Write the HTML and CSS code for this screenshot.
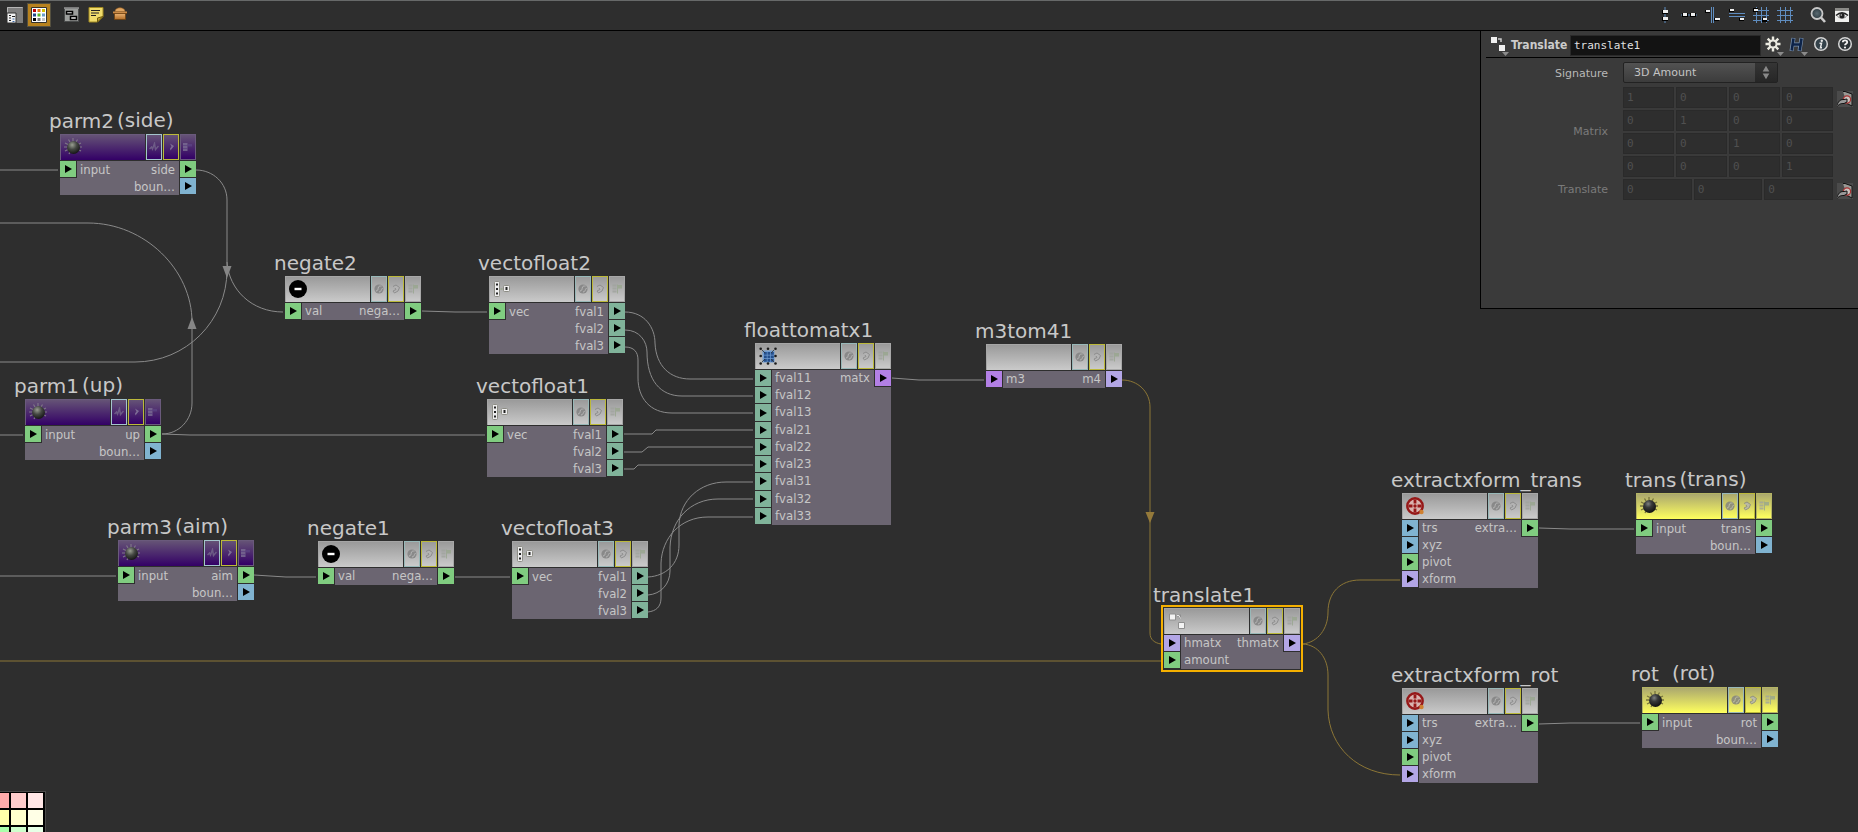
FILE: index.html
```
<!DOCTYPE html>
<html lang="en">
<head>
<meta charset="utf-8">
<title>Node network editor</title>
<link rel="stylesheet" href="styles.css">
</head>
<body>
<svg class="defs" aria-hidden="true">
  <defs>
    <radialGradient id="ball" cx=".4" cy=".3" r=".7"><stop offset="0" stop-color="#9a9f92"/><stop offset=".5" stop-color="#444742"/><stop offset="1" stop-color="#161616"/></radialGradient>
    <radialGradient id="darkball" cx=".4" cy=".3" r=".7"><stop offset="0" stop-color="#7d8080"/><stop offset=".4" stop-color="#383a3a"/><stop offset="1" stop-color="#111"/></radialGradient>
    <linearGradient id="crate" x2="0" y2="1"><stop offset="0" stop-color="#efb878"/><stop offset="1" stop-color="#b06d28"/></linearGradient>
    <radialGradient id="glass"><stop offset="0" stop-color="#5a6a72"/><stop offset="1" stop-color="#2d3a40"/></radialGradient>
    <symbol id="i-knob" viewBox="0 0 18 18"><g stroke="#7f7688" stroke-width="1.200"><path d="M9 0v3M4.500 1.500l1.500 2.500M13.500 1.500l-1.500 2.500M1 5l3 1.500M17 5l-3 1.500M0 9h3M18 9h-3M1 13l3-1.500M17 13l-3-1.500M5 16l1-2"/></g><circle cx="9.500" cy="9.500" r="6.500" fill="url(#ball)"/></symbol>
    <symbol id="i-knob-dark" viewBox="0 0 18 18"><g stroke="#77743d" stroke-width="1.300"><path d="M9 0v3M4.500 1.500l1.500 2.500M13.500 1.500l-1.500 2.500M1 5l3 1.500M17 5l-3 1.500M0 9h3M18 9h-3M1 13l3-1.500M17 13l-3-1.500M5 16l1-2"/></g><circle cx="9.500" cy="9.500" r="6.500" fill="url(#darkball)"/></symbol>
    <symbol id="i-minus" viewBox="0 0 18 18"><circle cx="9" cy="9" r="9" fill="#000"/><path d="M5.500 9h7" stroke="#fff" stroke-width="2.400"/></symbol>
    <symbol id="i-split" viewBox="0 0 18 18"><rect x="1.500" y="1.500" width="5" height="15" rx="1" fill="#eee" stroke="#8d8d85"/><path d="M3 3.500h2v2H3zM3 8h2v2H3zM3 12.500h2v2H3z" fill="#222"/><rect x="10.500" y="5.500" width="6" height="6" rx="1" fill="#eee" stroke="#8d8d85"/><path d="M12.500 7h2v3h-2z" fill="#222"/><path d="M7.500 9h2" stroke="#9aa58c" stroke-width="1.500"/></symbol>
    <symbol id="i-matrix" viewBox="0 0 18 18"><rect x="3.500" y="3.500" width="12" height="12" fill="#6f9bd0"/><g fill="#244f8c"><path d="M5 5h2.800v2.800H5zM8.500 5h2.800v2.800H8.500zM12 5h2.800v2.800H12zM5 8.500h2.800v2.800H5zM8.500 8.500h2.800v2.800H8.500zM12 8.500h2.800v2.800H12zM5 12h2.800v2.800H5zM8.500 12h2.800v2.800H8.500zM12 12h2.800v2.800H12z"/></g><g fill="#1c1c1c"><circle cx="1.700" cy="1.700" r="1.300"/><circle cx="9" cy="1.700" r="1.300"/><circle cx="16.500" cy="1.700" r="1.300"/><circle cx="1.700" cy="9" r="1.300"/><circle cx="16.500" cy="9" r="1.300"/><circle cx="1.700" cy="16.500" r="1.300"/><circle cx="9" cy="16.500" r="1.300"/><circle cx="16.500" cy="16.500" r="1.300"/></g><path d="M3 3l3 3M15 3l-3 3M3 15l3-3M15 15l-3-3" stroke="#333" stroke-width=".8"/></symbol>
    <symbol id="i-move" viewBox="0 0 18 18"><path d="M1.500 2h6v6h-6zM10.500 10.500h6v6h-6z" fill="#f3f3f3" stroke="#8f8f8f"/><path d="M9 3.500h3v3" fill="none" stroke="#8f8f8f" stroke-width="2"/><path d="M9 3.500h2l1.500 3" fill="none" stroke="#e4e4e4"/></symbol>
    <symbol id="i-wheel" viewBox="0 0 18 18"><circle cx="9" cy="9" r="7.700" fill="#d9b4b0" stroke="#961818" stroke-width="2.400"/><g fill="#961818"><circle cx="9" cy="9" r="1.700"/><path d="M7.600 2.500h2.800v4H7.600zM7.600 11.500h2.800v4H7.600zM2.500 7.600h4v2.800h-4zM11.500 7.600h4v2.800h-4z"/></g><circle cx="15.500" cy="15" r="2.200" fill="#d08030"/></symbol>
    <symbol id="i-bypass" viewBox="0 0 10 10"><circle cx="5" cy="5" r="4.600" fill="#808080"/><path d="M2 7c2 0 2-2 2.500-4C5 2 6 2 7.500 2M5 8c2 0 2-2 3.500-4" stroke="#b9b9b9" fill="none"/></symbol>
    <symbol id="i-link" viewBox="0 0 10 10"><path d="M2 2.500l3-1.500 3.500 2.500L7 7 3.500 9 2 7l3-1.500L4 4" fill="#b5b5b5" stroke="#858585"/></symbol>
    <symbol id="i-lock" viewBox="0 0 10 10"><path d="M.5 1.500h4M.5 4.500h4M.5 7.500h4" stroke="#a0a49e" stroke-width="2"/><path d="M5.500.5v9M6 1.500h4v2.500H6z" fill="#98a68e" stroke="#98a68e"/></symbol>
    <symbol id="i-curve" viewBox="0 0 10 10"><path d="M.5 7l2-2 1 2 2-5.500 1 6 3-3.500" fill="none" stroke="#75678c" stroke-width="1.500"/></symbol>
    <symbol id="i-hook" viewBox="0 0 10 10"><path d="M4 1.500l4 2.500-3.500 4.500L4 6.500l1.500-2z" fill="#8a7da0"/></symbol>
    <symbol id="i-bars" viewBox="0 0 10 10"><path d="M0 1h4.500v8H0z" fill="#7c6e95"/><path d="M5 2h4v2.500H5z" fill="#5b4383"/><path d="M0 3.500h5M0 6.500h5" stroke="#5b4383" stroke-width=".7"/></symbol>
    <symbol id="i-cable" viewBox="0 0 16 16"><path d="M0 0h16v16H0z" fill="#4b4b4b"/><path d="M6 .5h2l7 2.500v12l-5-2.500" fill="#989894" stroke="#111"/><circle cx="10" cy="8.500" r="3.600" fill="#ccc4c0" stroke="#a33" stroke-width="1.200"/><path d="M0 14c2-5 4-5.500 7-5.500l3-.5v3l-3 1.500c-3 0-4 0-7 3" fill="#999" stroke="#111"/></symbol>
  </defs>
</svg>

<header class="toolbar">
  <div class="tools">
    <button class="tool" aria-label="Tree list"><svg viewBox="0 0 16 16"><path d="M0 0h16v16H0z" fill="#7e7e7e"/><path d="M.5 16V.5H15.500" fill="none" stroke="#b5b5b5"/><path d="M0 6h9v10H0z" fill="#f2f2f2" stroke="#333"/><path d="M2 8.500h2M5 9.500h3M2 11h2M2 13.500h2" stroke="#222"/><path d="M5.500 12h2M5.500 14.500h2" stroke="#3a69a8"/></svg></button>
    <button class="tool active" aria-label="Color palette"><svg viewBox="0 0 16 16"><path d="M.5.500h15v15H.500z" fill="#fff" stroke="#35332d"/><path fill="#b00" d="M2 2h3v3H2z"/><path fill="#e07010" d="M6.500 2h3v3h-3z"/><path fill="#d8c000" d="M11 2h3v3h-3z"/><path fill="#234a8c" d="M2 6.500h3v3H2z"/><path fill="#57b820" d="M6.500 6.500h3v3h-3z"/><path fill="#6a9cc8" d="M11 6.500h3v3h-3z"/><path d="M2 11h3v3H2z"/><path fill="#777" d="M6.500 11h3v3h-3z"/><path fill="#c4c4c4" d="M11 11h3v3h-3z"/></svg></button>
  </div>
  <div class="tools">
    <button class="tool" aria-label="Network box"><svg viewBox="0 0 16 16"><path d="M.5 1.500h14v13H.500z" fill="#9c9e9c" stroke="#4a4c4c"/><path d="M0 1h15" stroke="#c6c6c6"/><path d="M2.500 4.500h6v2.500h-6zM6.500 9.500h6V12.500h-6z" fill="#e8e8e8" stroke="#000" stroke-width="1.500"/></svg></button>
    <button class="tool" aria-label="Sticky note"><svg viewBox="0 0 16 16"><path d="M1 .5h14v9l-5.500 5.500H1z" fill="#f0dc6c" stroke="#a08820"/><path d="M9.500 15v-4l5.500-1.500z" fill="#c4a832" stroke="#6d5a10"/><path d="M3 3.500h9M3 6h8M3 8.500h5" stroke="#222"/></svg></button>
    <button class="tool" aria-label="Subnet box"><svg viewBox="0 0 16 16"><path d="M2.500 6h11v6.500h-11z" fill="url(#crate)" stroke="#71430f" stroke-width=".8"/><path d="M3 4.500c0-5 10-5 10 0z" fill="#e0a663" stroke="#8c5518" stroke-width=".6"/><path d="M1 4.500h14v2H1z" fill="#c98a48"/><path d="M1 6.500h14" stroke="#6f400f" stroke-width=".8"/></svg></button>
  </div>
  <div class="tools end">
    <button class="tool" aria-label="Align vertically"><svg viewBox="0 0 16 16"><path d="M8 0v16" stroke="#5f8dc0"/><path d="M5 3h6v4H5zM5 10h6v4H5z"/><path d="M6 3h5v3H6zM6 10h5v3H6z" fill="#eee"/></svg></button>
    <button class="tool" aria-label="Align horizontally"><svg viewBox="0 0 16 16"><path d="M0 8h16" stroke="#5f8dc0"/><path d="M1 6h6v4H1zM9 6h6v4H9z"/><path d="M2 6h4v3H2zM10 6h4v3h-4z" fill="#eee"/></svg></button>
    <button class="tool" aria-label="Snap left"><svg viewBox="0 0 16 16"><path d="M6.500 0v16M8.500 0v16" stroke="#5f8dc0"/><path d="M0 3h5v3H0zM9 11h5v3H9z"/><path d="M1 3h4v2H1zM10 11h5v2h-5z" fill="#eee"/></svg></button>
    <button class="tool" aria-label="Snap rows"><svg viewBox="0 0 16 16"><path d="M0 6.500h16M0 9.500h16" stroke="#5f8dc0"/><path d="M0 2h5v3H0zM10 11h5v3h-5z"/><path d="M1 2h4v2H1zM11 11h4v2h-4z" fill="#eee"/></svg></button>
    <button class="tool" aria-label="Snap to grid"><svg viewBox="0 0 16 16"><path d="M3.500 0v16M8.500 0v16M13.500 0v16M0 3.500h16M0 8.500h16M0 13.500h16" stroke="#5f8dc0"/><path d="M0 1h5v4H0zM9 11h5v4H9z"/><path d="M1 2h4v2H1zM10 11h4v2h-4z" fill="#eee"/></svg></button>
    <button class="tool" aria-label="Show grid"><svg viewBox="0 0 16 16"><path d="M3.500 0v16M8.500 0v16M13.500 0v16M0 3.500h16M0 8.500h16M0 13.500h16" stroke="#5f8dc0"/></svg></button>
  </div>
  <div class="tools">
    <button class="tool" aria-label="Find"><svg viewBox="0 0 16 16"><circle cx="7" cy="6.500" r="5.500" fill="url(#glass)" stroke="#c8c8c8" stroke-width="1.800"/><path d="M11 10.500l4 4.500" stroke="#ccc" stroke-width="2.600"/></svg></button>
    <button class="tool" aria-label="Display options"><svg viewBox="0 0 16 16"><path d="M1 1h14v14H1z" fill="#f0f0ee"/><path d="M1 1h14v3H1z" fill="#8b8b88"/><path d="M2 8.500Q8 3 14 8.500" fill="none" stroke="#222" stroke-width="1.600"/><path d="M3.500 9.500Q8 13 12.500 9.500" fill="none" stroke="#777"/><circle cx="8" cy="8.700" r="2.600" fill="#222"/><circle cx="7.300" cy="8" r=".8" fill="#ccc"/></svg></button>
  </div>
</header>

<main class="canvas">
  <svg class="wires" aria-hidden="true">
    <g transform="translate(0 -31)">
      <g class="wire">
        <path d="M0 170H58"/>
        <path d="M0 223H88C145 223 192 270 192 322V403C192 420 179 434 162 434"/>
        <path d="M196 170C213 170 227 183 227 200V262C229 290 252 312 283 312"/>
        <path d="M227 262V270C227 321 186 362 135 362H0"/>
        <path d="M0 435H23"/>
        <path d="M162 434L190 435H485"/>
        <path d="M422 311L455 312H487"/>
        <path d="M625 312C645 312 655 328 655 343C656 366 670 379 690 379H753"/>
        <path d="M625 330C640 330 647 342 647 352C647 380 660 396 682 396H753"/>
        <path d="M625 347C634 347 638 352 638 360V378C638 398 650 413 672 413H753"/>
        <path d="M624 434H652L656 430H753"/>
        <path d="M624 452H642L648 447H753"/>
        <path d="M624 469H634L638 465H753"/>
        <path d="M648 577C666 576 679 564 679 545V525C680 500 700 482 726 482H753"/>
        <path d="M648 595C661 594 670 584 670 571V547C671 520 690 499 718 499H753"/>
        <path d="M648 612C656 611 661 607 661 598V563C662 538 680 517 708 517H753"/>
        <path d="M892 378L919 380H984"/>
        <path d="M0 576H116M254 575L286 577H316M455 577H510"/>
        <path d="M1539 528L1570 529H1634M1539 724L1570 723H1640"/>
      </g>
      <path class="arrow" d="M192 317L196.500 329H187.500Z"/>
      <path class="arrow" d="M227 278L222.500 266H231.500Z"/>
      <g class="wire gold">
        <path d="M1122 380C1138 380 1150 392 1150 407V633C1150 640 1155 643 1161 644"/>
        <path d="M0 661H1161"/>
        <path d="M1303 644C1318 642 1328 629 1328 612C1328 593 1340 580 1360 580H1400"/>
        <path d="M1303 644C1318 645 1328 658 1328 675V710C1329 747 1358 775 1400 775"/>
      </g>
      <path class="arrow gold" d="M1150 523L1145.500 512H1154.500Z"/>
    </g>
  </svg>

  <article class="node purple n-parm2">
    <h2 class="name"><span>parm2</span><span class="comment">(side)</span></h2>
    <div class="box">
      <div class="bar"><div class="cap"><svg><use href="#i-knob"/></svg></div><button class="flag" aria-label="Bypass"><svg><use href="#i-curve"/></svg></button><button class="flag preview" aria-label="Preview"><svg><use href="#i-hook"/></svg></button><button class="flag expand" aria-label="Expand"><svg><use href="#i-bars"/></svg></button></div>
      <div class="body"><ul class="ins"><li><i class="port green"></i>input</li></ul><ul class="outs"><li>side<i class="port green"></i></li><li>boun…<i class="port blue"></i></li></ul></div>
    </div>
  </article>

  <article class="node purple n-parm1">
    <h2 class="name"><span>parm1</span><span class="comment">(up)</span></h2>
    <div class="box">
      <div class="bar"><div class="cap"><svg><use href="#i-knob"/></svg></div><button class="flag" aria-label="Bypass"><svg><use href="#i-curve"/></svg></button><button class="flag preview" aria-label="Preview"><svg><use href="#i-hook"/></svg></button><button class="flag expand" aria-label="Expand"><svg><use href="#i-bars"/></svg></button></div>
      <div class="body"><ul class="ins"><li><i class="port green"></i>input</li></ul><ul class="outs"><li>up<i class="port green"></i></li><li>boun…<i class="port blue"></i></li></ul></div>
    </div>
  </article>

  <article class="node purple n-parm3">
    <h2 class="name"><span>parm3</span><span class="comment">(aim)</span></h2>
    <div class="box">
      <div class="bar"><div class="cap"><svg><use href="#i-knob"/></svg></div><button class="flag" aria-label="Bypass"><svg><use href="#i-curve"/></svg></button><button class="flag preview" aria-label="Preview"><svg><use href="#i-hook"/></svg></button><button class="flag expand" aria-label="Expand"><svg><use href="#i-bars"/></svg></button></div>
      <div class="body"><ul class="ins"><li><i class="port green"></i>input</li></ul><ul class="outs"><li>aim<i class="port green"></i></li><li>boun…<i class="port blue"></i></li></ul></div>
    </div>
  </article>

  <article class="node tight n-negate2">
    <h2 class="name"><span>negate2</span></h2>
    <div class="box">
      <div class="bar"><div class="cap"><svg><use href="#i-minus"/></svg></div><button class="flag" aria-label="Bypass"><svg><use href="#i-bypass"/></svg></button><button class="flag preview" aria-label="Preview"><svg><use href="#i-link"/></svg></button><button class="flag expand" aria-label="Expand"><svg><use href="#i-lock"/></svg></button></div>
      <div class="body"><ul class="ins"><li><i class="port green"></i>val</li></ul><ul class="outs"><li>nega…<i class="port green"></i></li></ul></div>
    </div>
  </article>

  <article class="node tight n-negate1">
    <h2 class="name"><span>negate1</span></h2>
    <div class="box">
      <div class="bar"><div class="cap"><svg><use href="#i-minus"/></svg></div><button class="flag" aria-label="Bypass"><svg><use href="#i-bypass"/></svg></button><button class="flag preview" aria-label="Preview"><svg><use href="#i-link"/></svg></button><button class="flag expand" aria-label="Expand"><svg><use href="#i-lock"/></svg></button></div>
      <div class="body"><ul class="ins"><li><i class="port green"></i>val</li></ul><ul class="outs"><li>nega…<i class="port green"></i></li></ul></div>
    </div>
  </article>

  <article class="node n-vec2">
    <h2 class="name"><span>vectofloat2</span></h2>
    <div class="box">
      <div class="bar"><div class="cap"><svg><use href="#i-split"/></svg></div><button class="flag" aria-label="Bypass"><svg><use href="#i-bypass"/></svg></button><button class="flag preview" aria-label="Preview"><svg><use href="#i-link"/></svg></button><button class="flag expand" aria-label="Expand"><svg><use href="#i-lock"/></svg></button></div>
      <div class="body"><ul class="ins"><li><i class="port green"></i>vec</li></ul><ul class="outs"><li>fval1<i class="port teal"></i></li><li>fval2<i class="port teal"></i></li><li>fval3<i class="port teal"></i></li></ul></div>
    </div>
  </article>

  <article class="node n-vec1">
    <h2 class="name"><span>vectofloat1</span></h2>
    <div class="box">
      <div class="bar"><div class="cap"><svg><use href="#i-split"/></svg></div><button class="flag" aria-label="Bypass"><svg><use href="#i-bypass"/></svg></button><button class="flag preview" aria-label="Preview"><svg><use href="#i-link"/></svg></button><button class="flag expand" aria-label="Expand"><svg><use href="#i-lock"/></svg></button></div>
      <div class="body"><ul class="ins"><li><i class="port green"></i>vec</li></ul><ul class="outs"><li>fval1<i class="port teal"></i></li><li>fval2<i class="port teal"></i></li><li>fval3<i class="port teal"></i></li></ul></div>
    </div>
  </article>

  <article class="node n-vec3">
    <h2 class="name"><span>vectofloat3</span></h2>
    <div class="box">
      <div class="bar"><div class="cap"><svg><use href="#i-split"/></svg></div><button class="flag" aria-label="Bypass"><svg><use href="#i-bypass"/></svg></button><button class="flag preview" aria-label="Preview"><svg><use href="#i-link"/></svg></button><button class="flag expand" aria-label="Expand"><svg><use href="#i-lock"/></svg></button></div>
      <div class="body"><ul class="ins"><li><i class="port green"></i>vec</li></ul><ul class="outs"><li>fval1<i class="port teal"></i></li><li>fval2<i class="port teal"></i></li><li>fval3<i class="port teal"></i></li></ul></div>
    </div>
  </article>

  <article class="node tight n-matx">
    <h2 class="name"><span>floattomatx1</span></h2>
    <div class="box">
      <div class="bar"><div class="cap"><svg><use href="#i-matrix"/></svg></div><button class="flag" aria-label="Bypass"><svg><use href="#i-bypass"/></svg></button><button class="flag preview" aria-label="Preview"><svg><use href="#i-link"/></svg></button><button class="flag expand" aria-label="Expand"><svg><use href="#i-lock"/></svg></button></div>
      <div class="body nine"><ul class="ins"><li><i class="port teal"></i>fval11</li><li><i class="port teal"></i>fval12</li><li><i class="port teal"></i>fval13</li><li><i class="port teal"></i>fval21</li><li><i class="port teal"></i>fval22</li><li><i class="port teal"></i>fval23</li><li><i class="port teal"></i>fval31</li><li><i class="port teal"></i>fval32</li><li><i class="port teal"></i>fval33</li></ul><ul class="outs"><li>matx<i class="port violet"></i></li></ul></div>
    </div>
  </article>

  <article class="node tight n-m4">
    <h2 class="name"><span>m3tom41</span></h2>
    <div class="box">
      <div class="bar"><div class="cap"></div><button class="flag" aria-label="Bypass"><svg><use href="#i-bypass"/></svg></button><button class="flag preview" aria-label="Preview"><svg><use href="#i-link"/></svg></button><button class="flag expand" aria-label="Expand"><svg><use href="#i-lock"/></svg></button></div>
      <div class="body"><ul class="ins"><li><i class="port violet"></i>m3</li></ul><ul class="outs"><li>m4<i class="port lilac"></i></li></ul></div>
    </div>
  </article>

  <article class="node tight selected n-translate">
    <h2 class="name"><span>translate1</span></h2>
    <div class="box">
      <div class="bar"><div class="cap"><svg><use href="#i-move"/></svg></div><button class="flag" aria-label="Bypass"><svg><use href="#i-bypass"/></svg></button><button class="flag preview" aria-label="Preview"><svg><use href="#i-link"/></svg></button><button class="flag expand" aria-label="Expand"><svg><use href="#i-lock"/></svg></button></div>
      <div class="body"><ul class="ins"><li><i class="port lilac"></i>hmatx</li><li><i class="port green"></i>amount</li></ul><ul class="outs"><li>thmatx<i class="port lilac"></i></li></ul></div>
    </div>
  </article>

  <article class="node tight n-xtrans">
    <h2 class="name"><span>extractxform_trans</span></h2>
    <div class="box">
      <div class="bar"><div class="cap"><svg><use href="#i-wheel"/></svg></div><button class="flag" aria-label="Bypass"><svg><use href="#i-bypass"/></svg></button><button class="flag preview" aria-label="Preview"><svg><use href="#i-link"/></svg></button><button class="flag expand" aria-label="Expand"><svg><use href="#i-lock"/></svg></button></div>
      <div class="body"><ul class="ins"><li><i class="port blue"></i>trs</li><li><i class="port blue"></i>xyz</li><li><i class="port green"></i>pivot</li><li><i class="port lilac"></i>xform</li></ul><ul class="outs"><li>extra…<i class="port green"></i></li></ul></div>
    </div>
  </article>

  <article class="node tight n-xrot">
    <h2 class="name"><span>extractxform_rot</span></h2>
    <div class="box">
      <div class="bar"><div class="cap"><svg><use href="#i-wheel"/></svg></div><button class="flag" aria-label="Bypass"><svg><use href="#i-bypass"/></svg></button><button class="flag preview" aria-label="Preview"><svg><use href="#i-link"/></svg></button><button class="flag expand" aria-label="Expand"><svg><use href="#i-lock"/></svg></button></div>
      <div class="body"><ul class="ins"><li><i class="port blue"></i>trs</li><li><i class="port blue"></i>xyz</li><li><i class="port green"></i>pivot</li><li><i class="port lilac"></i>xform</li></ul><ul class="outs"><li>extra…<i class="port green"></i></li></ul></div>
    </div>
  </article>

  <article class="node yellow n-trans">
    <h2 class="name"><span>trans</span><span class="comment">(trans)</span></h2>
    <div class="box">
      <div class="bar"><div class="cap"><svg><use href="#i-knob-dark"/></svg></div><button class="flag" aria-label="Bypass"><svg><use href="#i-bypass"/></svg></button><button class="flag preview" aria-label="Preview"><svg><use href="#i-link"/></svg></button><button class="flag expand" aria-label="Expand"><svg><use href="#i-lock"/></svg></button></div>
      <div class="body"><ul class="ins"><li><i class="port green"></i>input</li></ul><ul class="outs"><li>trans<i class="port green"></i></li><li>boun…<i class="port blue"></i></li></ul></div>
    </div>
  </article>

  <article class="node yellow n-rot">
    <h2 class="name wide"><span>rot</span><span class="comment">(rot)</span></h2>
    <div class="box">
      <div class="bar"><div class="cap"><svg><use href="#i-knob-dark"/></svg></div><button class="flag" aria-label="Bypass"><svg><use href="#i-bypass"/></svg></button><button class="flag preview" aria-label="Preview"><svg><use href="#i-link"/></svg></button><button class="flag expand" aria-label="Expand"><svg><use href="#i-lock"/></svg></button></div>
      <div class="body"><ul class="ins"><li><i class="port green"></i>input</li></ul><ul class="outs"><li>rot<i class="port green"></i></li><li>boun…<i class="port blue"></i></li></ul></div>
    </div>
  </article>

  <div class="palette">
    <i class="red strong"></i><i class="red mid"></i><i class="red soft"></i>
    <i class="sun strong"></i><i class="sun mid"></i><i class="sun soft"></i>
    <i class="leaf strong"></i><i class="leaf mid"></i><i class="leaf soft"></i>
  </div>

  <aside class="panel">
    <div class="head">
      <button class="act" aria-label="Node menu"><svg viewBox="0 0 24 24"><path d="M5 4h6v6H5zM13 12h6v6h-6z" fill="#f0f0f0"/><path d="M12 6h3v3" fill="none" stroke="#ccc" stroke-width="1.500"/><path d="M16 19h7l-3.500 4z" fill="#8a8a8a"/></svg></button>
      <label class="title" for="node-name">Translate</label>
      <input id="node-name" class="nodename" type="text" value="translate1">
      <button class="act" aria-label="Settings"><svg viewBox="0 0 24 24"><g stroke="#eae9e0" stroke-width="2.400"><path d="M12 3.500v15M4.500 11h15M6.700 5.700l10.600 10.600M17.300 5.700L6.700 16.300"/></g><circle cx="12" cy="11" r="3.500" fill="#3a3a3a" stroke="#eae9e0" stroke-width="2"/><path d="M16 19h7l-3.500 4z" fill="#8a8a8a"/></svg></button>
      <button class="act" aria-label="Houdini menu"><svg viewBox="0 0 24 24"><path d="M8.500 5L6.500 18M16.500 5l-2 13M8 11.500h7" fill="none" stroke="#7d94b0" stroke-width="4"/><path d="M8.500 5.500L6.700 17.500M16.500 5.500l-1.800 12M8 11.500h7" fill="none" stroke="#0d2348" stroke-width="2.600"/><path d="M16 19h7l-3.500 4z" fill="#8a8a8a"/></svg></button>
      <button class="act" aria-label="Info"><svg viewBox="0 0 24 24"><circle cx="12" cy="11" r="6.300" fill="#34424a" stroke="#d4d4d4" stroke-width="1.500"/><circle cx="12.800" cy="7.800" r="1.200" fill="#e8e8e8"/><path d="M10.500 10.200h2l-1 4.500h1.500" fill="none" stroke="#e8e8e8" stroke-width="1.500"/></svg></button>
      <button class="act" aria-label="Help"><svg viewBox="0 0 24 24"><circle cx="12" cy="11" r="6.300" fill="#2b3236" stroke="#d4d4d4" stroke-width="1.500"/><path d="M9.800 9.300c0-2.600 4.400-2.600 4.400 0 0 1.500-2.200 1.500-2.200 3" fill="none" stroke="#f0f0f0" stroke-width="1.800"/><circle cx="12" cy="14.500" r="1.100" fill="#f0f0f0"/></svg></button>
    </div>
    <form class="form">
      <label for="sig">Signature</label>
      <div class="pick"><select id="sig"><option>3D Amount</option></select><svg class="updown" viewBox="0 0 22 20" aria-hidden="true"><path d="M7.500 9L11 3l3.500 6zM7.500 11L11 17l3.500-6z" fill="#888"/></svg></div>
      <span></span>

      <label class="dim" for="m00">Matrix</label>
      <div class="cells four">
        <input id="m00" value="1" disabled><input aria-label="Matrix 1 2" value="0" disabled><input aria-label="Matrix 1 3" value="0" disabled><input aria-label="Matrix 1 4" value="0" disabled>
        <input aria-label="Matrix 2 1" value="0" disabled><input aria-label="Matrix 2 2" value="1" disabled><input aria-label="Matrix 2 3" value="0" disabled><input aria-label="Matrix 2 4" value="0" disabled>
        <input aria-label="Matrix 3 1" value="0" disabled><input aria-label="Matrix 3 2" value="0" disabled><input aria-label="Matrix 3 3" value="1" disabled><input aria-label="Matrix 3 4" value="0" disabled>
        <input aria-label="Matrix 4 1" value="0" disabled><input aria-label="Matrix 4 2" value="0" disabled><input aria-label="Matrix 4 3" value="0" disabled><input aria-label="Matrix 4 4" value="1" disabled>
      </div>
      <button type="button" class="cable" aria-label="Matrix is connected"><svg><use href="#i-cable"/></svg></button>

      <label class="dim" for="t0">Translate</label>
      <div class="cells three"><input id="t0" value="0" disabled><input aria-label="Translate y" value="0" disabled><input aria-label="Translate z" value="0" disabled></div>
      <button type="button" class="cable" aria-label="Translate is connected"><svg><use href="#i-cable"/></svg></button>
    </form>
  </aside>
</main>
</body>
</html>
```
FILE: styles.css
```
* { box-sizing: border-box; }
body {
  margin: 0;
  min-height: 100vh;
  display: flex;
  flex-direction: column;
  background: #2e2e2e;
  color: #c8c8c8;
  font: 11px/16px "DejaVu Sans", sans-serif;
}
button { padding: 0; border: 0; background: none; }
svg { display: block; }
.defs { position: absolute; width: 0; height: 0; }

/* toolbar */
.toolbar {
  display: flex;
  gap: 9px;
  padding: 2px 4px 3px 3px;
  border-top: 1px solid #676969;
  border-bottom: 1px solid #000;
}
.tools { display: flex; }
.tools.end { margin-left: auto; }
.tool { width: 24px; height: 24px; display: grid; place-items: center; }
.tool svg { width: 16px; height: 16px; }
.tool.active { background: #b8821e; border: 1px solid #55503f; }

/* canvas */
.canvas { position: relative; flex: 1; overflow: hidden; }
.wires { position: absolute; inset: 0; width: 100%; height: 100%; }
.wire { fill: none; stroke: #8a8a8a; stroke-width: 1; }
.wire.gold { stroke: #8c7636; }
.arrow { fill: #868686; }
.arrow.gold { fill: #94793a; }

.node { position: absolute; width: 136px; }
.name {
  display: flex;
  align-items: flex-end;
  gap: 3px;
  height: 25px;
  margin: 0 0 0 -11px;
  padding-bottom: 1px;
  font: 20px/24px "DejaVu Sans", sans-serif;
  color: #c8c8c8;
  white-space: nowrap;
}
.name.wide { gap: 13px; }
.comment { padding-bottom: 1px; }
.selected .box { outline: 2px solid #f5b000; outline-offset: 1px; }

.n-parm2 { left: 60px; top: 78px; }
.n-parm1 { left: 25px; top: 343px; }
.n-parm3 { left: 118px; top: 484px; }
.n-negate2 { left: 285px; top: 220px; }
.n-negate1 { left: 318px; top: 485px; }
.n-vec2 { left: 489px; top: 220px; }
.n-vec1 { left: 487px; top: 343px; }
.n-vec3 { left: 512px; top: 485px; }
.n-matx { left: 755px; top: 287px; }
.n-m4 { left: 986px; top: 288px; }
.n-translate { left: 1164px; top: 552px; }
.n-xtrans { left: 1402px; top: 437px; }
.n-xrot { left: 1402px; top: 632px; }
.n-trans { left: 1636px; top: 437px; }
.n-rot { left: 1642px; top: 631px; }

.box { background: #2e2e2e; }
.bar { display: flex; gap: 1px; height: 26px; margin-bottom: 1px; }
.cap, .flag {
  background: linear-gradient(#9a9a9a, #cacaca);
  border: 1px solid #a6a6a6;
}
.cap { flex: 1; padding: 3px; border-right: 0; border-bottom: 0; }
.cap svg { width: 18px; height: 18px; }
.flag { width: 16px; display: grid; place-items: center; border-color: #98b8b8; }
.flag svg { width: 10px; height: 10px; opacity: .8; }
.flag.preview { border-color: #bcb93a; }
.flag.expand { border-color: #a8a8a8; }
.purple .cap, .purple .flag { background: linear-gradient(#655376, #330066); }
.purple .cap, .purple .expand { border-color: #6a5a7c; }
.purple .flag:not(.preview):not(.expand) { border-color: #a4c4cc; }
.yellow .cap, .yellow .flag { background: linear-gradient(#aba86e, #ffff5e); }
.yellow .cap, .yellow .expand { border-color: #b4b464; }

.body {
  display: flex;
  justify-content: space-between;
  background: #6b6571;
  font: 13px/17px "DejaVu Sans Condensed", "DejaVu Sans", sans-serif;
  color: #c6c6c6;
}
.tight .body { line-height: 15px; }
.body.nine { height: 155px; }
.body ul { display: flex; flex-direction: column; margin: 0; padding: 0; list-style: none; }
.body li { display: flex; height: 17px; gap: 3px; }
.outs li { justify-content: flex-end; gap: 4px; }
.nine .ins li { flex: 1; }
.port {
  display: flex;
  align-items: center;
  justify-content: center;
  width: 17px;
  border: 0 solid #2e2e2e;
  border-bottom-width: 1px;
}
.ins .port { border-right-width: 1px; }
.outs .port { border-left-width: 1px; }
.port::before {
  content: "";
  border-left: 7px solid #000;
  border-top: 4px solid transparent;
  border-bottom: 4px solid transparent;
}
.green { background: #80cc80; }
.blue { background: #80b3d0; }
.teal { background: #80b39a; }
.violet { background: #b380e6; }
.lilac { background: #b3a6e6; }

/* colour swatches in the corner */
.palette {
  position: absolute;
  left: -8px;
  bottom: 0;
  display: grid;
  grid-template: 15px 15px 5px / 15px 15px 15px;
  gap: 2px;
  padding: 1px 2px 0 2px;
  background: #000;
  border: solid #4a4a4a;
  border-width: 1px 1px 0 0;
}
.red.strong { background: #ffaaaa; }
.red.mid { background: #ffcccc; }
.red.soft { background: #ffe6e6; }
.sun.strong { background: #ffffaa; }
.sun.mid { background: #ffffcc; }
.sun.soft { background: #ffffe6; }
.leaf.strong { background: #aaffaa; }
.leaf.mid { background: #ccffcc; }
.leaf.soft { background: #e6ffe6; }

/* parameter panel */
.panel {
  position: absolute;
  top: 0;
  right: 0;
  width: 378px;
  padding-bottom: 108px;
  background: #3a3a3a;
  border: solid #000;
  border-width: 0 0 1px 1px;
}
.head {
  display: grid;
  grid-template-columns: 25px 59px 1fr repeat(4, 24px);
  align-items: center;
  margin-left: 5px;
  padding: 2px 1px 0 0;
  border-bottom: 1px solid #000;
}
.act { display: block; height: 24px; }
.act svg { width: 24px; height: 24px; }
.title { font: bold 12px/16px "DejaVu Sans Condensed", "DejaVu Sans", sans-serif; color: #ccc; }
.nodename, .cells input {
  min-width: 0;
  height: 21px;
  padding: 0 3px;
  border: 1px solid #2a2a2a;
  background: #131313;
  color: #e0e0e0;
  font: 11px/16px "DejaVu Sans Mono", monospace;
}
.form {
  display: grid;
  grid-template-columns: 127px 210px 24px;
  column-gap: 15px;
  row-gap: 2px;
  align-items: center;
  padding-top: 4px;
  color: #b8b8b8;
}
.form label { text-align: right; }
.form .dim { color: #7a7a7a; }
.pick { position: relative; width: 155px; margin-bottom: 2px; }
.pick select {
  display: block;
  width: 100%;
  height: 21px;
  padding: 0 10px;
  appearance: none;
  border: 1px solid #222;
  border-radius: 2px;
  background: linear-gradient(#525252, #3c3c3c);
  color: #c4c4c4;
  font: 11px/16px "DejaVu Sans", sans-serif;
}
.updown {
  position: absolute;
  top: 1px;
  right: 1px;
  width: 22px;
  height: 19px;
  background: linear-gradient(#353535, #262626);
  pointer-events: none;
}
.cells { display: grid; gap: 2px; }
.four { grid-template-columns: repeat(4, 1fr); }
.three { grid-template-columns: repeat(3, 1fr); }
.cells input { background: #2e2e2e; color: #505050; border-color: #2a2a2a; }
.cable { align-self: start; margin: 4px 0 0 -11px; }
.cable svg { width: 16px; height: 16px; }
```
